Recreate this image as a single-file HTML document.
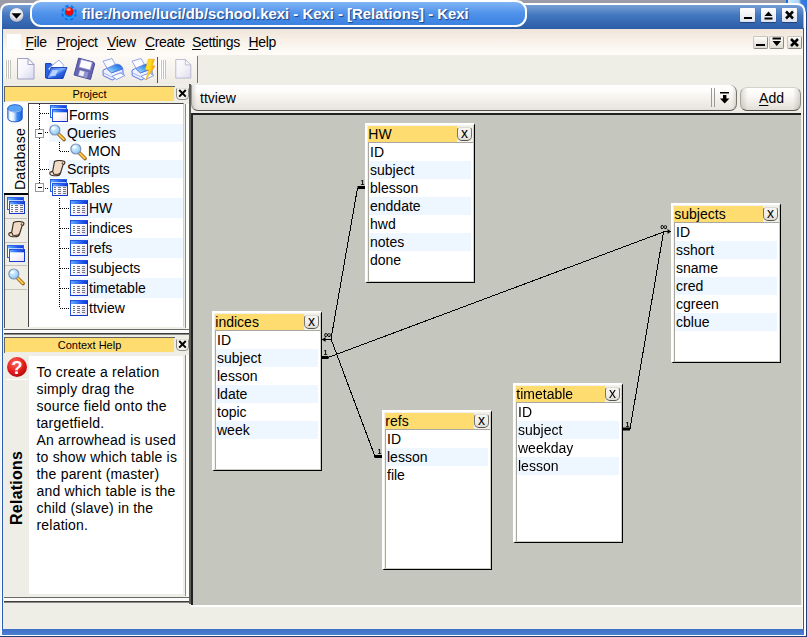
<!DOCTYPE html><html><head><meta charset="utf-8"><title>Kexi</title><style>
*{margin:0;padding:0;box-sizing:border-box}
html,body{width:807px;height:637px;overflow:hidden;background:#9b9ba7;font-family:"Liberation Sans",sans-serif;font-size:14px;color:#000}
.a{position:absolute}
#win{position:absolute;left:0;top:0;width:807px;height:637px;overflow:hidden}
.t{position:absolute;white-space:nowrap;line-height:18px;height:18px}
u{text-decoration:underline;text-underline-offset:2px}
.tbl{position:absolute;width:110px;height:160px;background:#f1f0e9;border-left:2px solid #fff;border-top:2px solid #fff;border-right:1px solid #000;border-bottom:1px solid #000;box-shadow:inset -1px -1px 0 #cdccc2}
.tbl .hd{position:absolute;left:1px;top:1px;width:89px;height:16px;background:#ffdc70;line-height:16px;padding-left:0.3px;white-space:nowrap}
.tbl .cl{position:absolute;left:90px;top:1.5px;width:15px;height:14.500px;border:1px solid #77756e;border-top-color:#dddbd3;border-bottom-color:#55534e;border-radius:3px 3px 5px 5px;background:linear-gradient(#f6f5f0,#efede7 60%,#dedbd2);font-size:14px;line-height:11.500px;text-align:center}
.tbl .lv{position:absolute;left:1px;top:17px;width:105px;height:139px;border-left:1px solid #a8a8a0;border-top:1px solid #a8a8a0;background:#fff}
.tbl .r{position:absolute;left:0px;width:102px;height:18px;line-height:18px;padding-left:1px;white-space:nowrap}
.tbl .r.alt{background:#eef6ff}
.row{position:absolute;left:49px;width:135px;line-height:18px;white-space:nowrap}
.row.alt{background:#eef6ff}
</style></head><body><div id="win">
<div class="a" style="left:786px;top:0;width:21px;height:12px;background:linear-gradient(90deg,#1a6ae0 0,#1a6ae0 2px,#cfe8fa 2px,#a8d4f6 13px,#3a80e0 15px,#2f74dc 21px)"></div>

<svg class="a" style="left:0;top:0" width="807" height="30" viewBox="0 0 807 30">
<defs>
<linearGradient id="tb" x1="0" y1="0" x2="0" y2="1"><stop offset="0" stop-color="#7ca2d8"/><stop offset="0.45" stop-color="#4176be"/><stop offset="1" stop-color="#2a5aa4"/></linearGradient>
<linearGradient id="tab" x1="0" y1="0" x2="0" y2="1"><stop offset="0" stop-color="#86b8f6"/><stop offset="0.5" stop-color="#4f92ea"/><stop offset="1" stop-color="#3a80e0"/></linearGradient>
<radialGradient id="btn" cx="0.5" cy="0.3" r="0.7"><stop offset="0" stop-color="#ffffff"/><stop offset="0.6" stop-color="#e4e6ee"/><stop offset="1" stop-color="#a8adc0"/></radialGradient>
</defs>
<path d="M1,30 V12 Q1,4 9,4 H796.500 Q804.500,4 804.500,12 V30 Z" fill="url(#tb)" stroke="#fff" stroke-width="2"/>
<rect x="31" y="1" width="495" height="25" rx="10" ry="10" fill="url(#tab)" stroke="#fff" stroke-width="2"/>
<circle cx="16.5" cy="15.5" r="7.5" fill="#274f96" opacity="0.5"/>
<circle cx="16.5" cy="15" r="7" fill="url(#btn)"/>
<path d="M11.5,13.300 H21.500 L16.500,18.800 Z" fill="#000"/>
</svg>

<svg class="a" style="left:60px;top:4px" width="18" height="18" viewBox="0 0 18 18"><g transform="rotate(8 9 8.800)"><circle cx="9" cy="8.800" r="5.900" fill="#0874f2"/><circle cx="9" cy="8.800" r="6.300" fill="none" stroke="#0874f2" stroke-width="3" stroke-dasharray="2.800 2.148"/><circle cx="9" cy="8.800" r="5.200" fill="none" stroke="#2cb4ff" stroke-width="1.400" opacity="0.900"/></g><circle cx="9.300" cy="7.500" r="4.200" fill="#ea0a0a"/><ellipse cx="8.600" cy="5.600" rx="2.400" ry="1.300" fill="#ff9a90" opacity="0.900"/></svg>
<div class="t" id="title" style="left:81.500px;top:5px;font-weight:bold;font-size:14.9px;color:#fff;text-shadow:1px 1px 1px #1c3f80;letter-spacing:0px">file:/home/luci/db/school.kexi - Kexi - [Relations] - Kexi</div>
<div class="a" style="left:740px;top:8px;width:15px;height:14px;background:linear-gradient(#ffffff,#dfe3ee);border-radius:1px;box-shadow:0 1px 1px #1d3f7c"></div><div class="a" style="left:744px;top:17px;width:8px;height:2px;background:#000"></div>
<div class="a" style="left:761px;top:8px;width:15px;height:14px;background:linear-gradient(#ffffff,#dfe3ee);border-radius:1px;box-shadow:0 1px 1px #1d3f7c"></div><svg class="a" style="left:761px;top:8px" width="15" height="14"><path d="M3.5,8 L7.5,3.5 L11.5,8 Z" fill="#000"/><rect x="3.5" y="9.5" width="8" height="2" fill="#000"/></svg>
<div class="a" style="left:782px;top:8px;width:15px;height:14px;background:linear-gradient(#ffffff,#dfe3ee);border-radius:1px;box-shadow:0 1px 1px #1d3f7c"></div><svg class="a" style="left:782px;top:8px" width="15" height="14"><path d="M4,3.5 L11,10.5 M11,3.5 L4,10.5" stroke="#000" stroke-width="2.500"/></svg>
<div class="a" style="left:3px;top:29px;width:800px;height:600px;background:#efeee6"></div>
<div class="a" style="left:0;top:12px;width:1px;height:625px;background:#f2f5fa"></div>
<div class="a" style="left:1px;top:12px;width:1px;height:625px;background:#fff"></div>
<div class="a" style="left:2px;top:28px;width:1px;height:607px;background:#2f5fae"></div>
<div class="a" style="left:802px;top:29px;width:1px;height:600px;background:#fcf8ee"></div>
<div class="a" style="left:803px;top:28px;width:1px;height:607px;background:#2a5a9e"></div>
<div class="a" style="left:804px;top:12px;width:2px;height:625px;background:#fff"></div>
<div class="a" style="left:806px;top:12px;width:1px;height:625px;background:#1f3f78"></div>
<div class="a" style="left:2px;top:629px;width:802px;height:6px;background:linear-gradient(#3d70c4,#4a7fd2)"></div>
<div class="a" style="left:1px;top:635px;width:805px;height:1px;background:#fff"></div>
<div class="a" style="left:0;top:636px;width:807px;height:1px;background:#1f3f78"></div>
<div class="a" style="left:3px;top:29px;width:800px;height:26px;background:linear-gradient(#efe4d8,#f8f1e9 45%,#fffcf8)"></div>
<div class="a" style="left:7px;top:34px;width:14px;height:15px;background:#fff"></div>
<div class="t" style="left:25.5px;top:33px;letter-spacing:-0.35px"><u>F</u>ile</div>
<div class="t" style="left:56.5px;top:33px;letter-spacing:-0.35px"><u>P</u>roject</div>
<div class="t" style="left:107px;top:33px;letter-spacing:-0.35px"><u>V</u>iew</div>
<div class="t" style="left:145px;top:33px;letter-spacing:-0.35px"><u>C</u>reate</div>
<div class="t" style="left:192px;top:33px;letter-spacing:-0.35px"><u>S</u>ettings</div>
<div class="t" style="left:248.5px;top:33px;letter-spacing:-0.35px"><u>H</u>elp</div>
<div class="a" style="left:753px;top:36px;width:15px;height:13px;background:linear-gradient(#fdfdfb,#dddbd2);border:1px solid #8a8a84;border-top-color:#c8c6be;border-left-color:#c8c6be;border-radius:2px"></div><div class="a" style="left:756px;top:44px;width:9px;height:2px;background:#000"></div>
<div class="a" style="left:769px;top:36px;width:15px;height:13px;background:linear-gradient(#fdfdfb,#dddbd2);border:1px solid #8a8a84;border-top-color:#c8c6be;border-left-color:#c8c6be;border-radius:2px"></div><svg class="a" style="left:769px;top:36px" width="15" height="13"><rect x="3.500" y="1.500" width="8.500" height="2" fill="#000"/><path d="M3.500,5 H12 L7.750,10 Z" fill="#000"/></svg>
<div class="a" style="left:786.5px;top:36px;width:15px;height:13px;background:linear-gradient(#fdfdfb,#dddbd2);border:1px solid #8a8a84;border-top-color:#c8c6be;border-left-color:#c8c6be;border-radius:2px"></div><svg class="a" style="left:786.5px;top:36px" width="15" height="13"><path d="M4,3 L11,10 M11,3 L4,10" stroke="#000" stroke-width="2.500"/></svg>
<div class="a" style="left:3px;top:55px;width:194px;height:29px;background:linear-gradient(#fdfbf7,#f5f1ec 55%,#eeebe4)"></div>
<div class="a" style="left:197px;top:56px;width:1px;height:27px;background:#777"></div>
<div class="a" style="left:157px;top:57px;width:1px;height:26px;background:#555"></div>
<div class="a" style="left:5px;top:60px;width:6px;height:19px;background:linear-gradient(90deg,#fff 0,#fff 1px,#c3c4bb 1px,#c3c4bb 2px,#fff 2px,#fff 3px,#c3c4bb 3px,#c3c4bb 4px,#fff 4px,#fff 5px,#c3c4bb 5px,#c3c4bb 6px)"></div>
<div class="a" style="left:160px;top:60px;width:6px;height:19px;background:linear-gradient(90deg,#fff 0,#fff 1px,#c3c4bb 1px,#c3c4bb 2px,#fff 2px,#fff 3px,#c3c4bb 3px,#c3c4bb 4px,#fff 4px,#fff 5px,#c3c4bb 5px,#c3c4bb 6px)"></div>
<svg class="a" style="left:0;top:0" width="0" height="0"><defs>
<linearGradient id="docg" x1="0" y1="0" x2="1" y2="1"><stop offset="0" stop-color="#ffffff"/><stop offset="0.5" stop-color="#f4f4fc"/><stop offset="1" stop-color="#d6d6f0"/></linearGradient>
<linearGradient id="wt" x1="0" y1="0" x2="1" y2="0"><stop offset="0" stop-color="#62acff"/><stop offset="0.5" stop-color="#2e6cf0"/><stop offset="1" stop-color="#1238dc"/></linearGradient>
<linearGradient id="wb" x1="0" y1="0" x2="1" y2="1"><stop offset="0" stop-color="#ffffff"/><stop offset="0.5" stop-color="#fbf9ff"/><stop offset="1" stop-color="#e4def6"/></linearGradient>
<linearGradient id="fold" x1="0" y1="0" x2="1" y2="1"><stop offset="0" stop-color="#1c50d8"/><stop offset="0.45" stop-color="#7fb0ff"/><stop offset="0.6" stop-color="#2a64e4"/><stop offset="1" stop-color="#1038b0"/></linearGradient>
<radialGradient id="glass" cx="0.35" cy="0.3" r="0.8"><stop offset="0" stop-color="#e8f8ff"/><stop offset="0.6" stop-color="#a8d8fa"/><stop offset="1" stop-color="#88bdf0"/></radialGradient>
<linearGradient id="cyl" x1="0" y1="0" x2="1" y2="0"><stop offset="0" stop-color="#9cc8fa"/><stop offset="0.2" stop-color="#ffffff"/><stop offset="0.42" stop-color="#d8ecff"/><stop offset="0.65" stop-color="#3c8cf0"/><stop offset="1" stop-color="#1a62e0"/></linearGradient>
<linearGradient id="prn" x1="0" y1="1" x2="1" y2="0"><stop offset="0" stop-color="#c4ecff"/><stop offset="0.45" stop-color="#5aa8f4"/><stop offset="1" stop-color="#1c58dc"/></linearGradient>
<linearGradient id="bolt" x1="0" y1="0" x2="1" y2="0.3"><stop offset="0" stop-color="#fff428"/><stop offset="0.55" stop-color="#ffd81a"/><stop offset="1" stop-color="#f89410"/></linearGradient>
<g id="tblicon"><rect x="0.5" y="0.5" width="17" height="15" fill="url(#wb)" stroke="#2354e2"/><rect x="1" y="1" width="16" height="3" fill="url(#wt)"/><path d="M0.500,15.500 H17.500 V0.500" fill="none" stroke="#1636c8"/><g fill="#74747c"><rect x="3" y="6" width="2" height="1"/><rect x="7" y="6" width="3" height="1"/><rect x="12" y="6" width="3" height="1"/><rect x="3" y="8" width="2" height="1"/><rect x="7" y="8" width="3" height="1"/><rect x="12" y="8" width="3" height="1"/><rect x="3" y="10" width="2" height="1"/><rect x="7" y="10" width="3" height="1"/><rect x="12" y="10" width="3" height="1"/><rect x="3" y="12" width="2" height="1"/><rect x="7" y="12" width="3" height="1"/><rect x="12" y="12" width="3" height="1"/></g></g>
<g id="forms"><rect x="0.5" y="0.5" width="16" height="12" fill="#fafbff" stroke="#2a62e6"/><rect x="1" y="1" width="15" height="2.300" fill="url(#wt)"/><rect x="2.500" y="4.500" width="15" height="12" fill="url(#wb)" stroke="#2354e2"/><rect x="3" y="5" width="14" height="2.300" fill="url(#wt)"/><path d="M2.500,16.500 H17.500 V4.500" fill="none" stroke="#1636c8"/></g>
<g id="tables"><rect x="0.5" y="0.5" width="16" height="12" fill="#fafbff" stroke="#2a62e6"/><rect x="1" y="1" width="15" height="2.300" fill="url(#wt)"/><rect x="2.500" y="4.500" width="15" height="12" fill="url(#wb)" stroke="#2354e2"/><rect x="3" y="5" width="14" height="2.300" fill="url(#wt)"/><path d="M2.500,16.500 H17.500 V4.500" fill="none" stroke="#1636c8"/><g fill="#74747c"><rect x="4" y="8" width="2" height="1"/><rect x="8" y="8" width="3" height="1"/><rect x="13" y="8" width="3" height="1"/><rect x="4" y="10" width="2" height="1"/><rect x="8" y="10" width="3" height="1"/><rect x="13" y="10" width="3" height="1"/><rect x="4" y="12" width="2" height="1"/><rect x="8" y="12" width="3" height="1"/><rect x="13" y="12" width="3" height="1"/><rect x="4" y="14" width="2" height="1"/><rect x="8" y="14" width="3" height="1"/><rect x="13" y="14" width="3" height="1"/></g></g>
<g id="mag"><path d="M9,9.500 L15,15.500" stroke="#8a5a10" stroke-width="3.600" stroke-linecap="round"/><path d="M9.500,10 L14.800,15.300" stroke="#ffc848" stroke-width="2" stroke-linecap="round"/><circle cx="5.800" cy="6" r="5" fill="url(#glass)" stroke="#7f93b8" stroke-width="1.200"/><ellipse cx="4.300" cy="4.200" rx="1.800" ry="1.200" fill="#fff" opacity="0.8"/></g>
<g id="scroll"><path d="M5.500,1.500 C8,0.500 12,0.300 15,1.200 C16.500,2 16,4.500 14.200,4.300 L11.500,13 C10.800,15.800 7,16.200 2.500,15.200 C0.200,14.600 0.200,11.800 2.300,11.600 L3.600,11.700 Z" fill="#f0dcc6" stroke="#3e2c22" stroke-width="1.150"/><path d="M2.300,11.700 C4,11.500 5.500,12.800 4.200,14 C6.500,14.800 9.500,14.600 11,13" fill="none" stroke="#3e2c22" stroke-width="1"/><path d="M14.200,4.300 C13,4.200 12.800,2.800 13.800,2.400" fill="none" stroke="#3e2c22" stroke-width="1"/></g>
<g id="doc"><path d="M0.500,0.500 H11 L17,6.500 V21 H0.500 Z" fill="url(#docg)" stroke="#a2a2c6"/><path d="M11,0.500 V6.500 H17 Z" fill="#fbfbff" stroke="#a2a2c6" stroke-linejoin="round"/></g>
<g id="printer"><path d="M1,12.300 L4.600,10.300 L9.500,14.800 L20.800,10.800 L21.200,16.300 L10.200,22 L1.200,17.600 Z" fill="#eef0ff" stroke="#4468de" stroke-width="0.900" stroke-linejoin="round"/><path d="M4.800,10.400 L13.800,6.300 C17.500,5.800 20.300,8 20.700,10.800 L9.500,14.800 Z" fill="url(#prn)" stroke="#2a66dc" stroke-width="0.600"/><path d="M1,3.200 L10,0.500 L13.300,6.300 L5,10.200 Z" fill="#fbfbff" stroke="#7a92e2" stroke-width="0.800" stroke-linejoin="round"/><path d="M1.200,14.800 L10,19 L21,13.500" fill="none" stroke="#8aa2ec" stroke-width="0.800"/><path d="M10,18.300 L18.200,15 L23,17.400 L14.600,21.500 Z" fill="#fdfdff" stroke="#6a86e2" stroke-width="0.800" stroke-linejoin="round"/></g>
</defs></svg><svg class="a" style="left:17px;top:58px" width="18" height="22"><use href="#doc"/></svg><svg class="a" style="left:44px;top:59px" width="24" height="21">
<path d="M1.500,4.500 H7 L8.500,6.500 H14 V19 H1.500 Z" fill="#2a62e2" stroke="#1a44c0"/>
<path d="M4.500,9.500 L15,1 L19.800,6.300 L17,10 L7,14 Z" fill="#fff" stroke="#7a9ae0" stroke-width="0.800"/>
<path d="M3,19.500 L7,8.500 H23 L19,19.500 Z" fill="url(#fold)" stroke="#143cb8" stroke-width="0.900"/>
<path d="M6,17 L8.300,11 H14 L11.500,17 Z" fill="#cfe4ff" opacity="0.75"/>
</svg><svg class="a" style="left:72px;top:56px" width="25" height="26"><g transform="rotate(15 12.500 13)">
<path d="M4,4 H19.500 L21,5.500 V21.500 H4 Z" fill="#6466b2" stroke="#4a4a96" stroke-width="0.900"/>
<rect x="6.800" y="4.600" width="11.400" height="8" fill="#fdfdff" stroke="#9a9ad0" stroke-width="0.600"/>
<rect x="7.800" y="15" width="9.400" height="6.300" fill="#9294cc"/>
<rect x="8.600" y="15.600" width="4.600" height="4.800" fill="#f0f0fa"/>
</g></svg><svg class="a" style="left:102px;top:58px" width="24" height="23"><use href="#printer"/></svg><svg class="a" style="left:131px;top:58px" width="25" height="23"><use href="#printer"/><path d="M17.500,1 L23.500,1.500 L21.200,7.500 L24,8 L14.800,22 L17.600,12.200 L14.200,11.500 Z" fill="url(#bolt)" stroke="#ee9a10" stroke-width="0.500"/></svg><svg class="a" style="left:175px;top:59px;opacity:0.75" width="17" height="20" viewBox="0 0 18 22"><use href="#doc"/></svg>
<div class="a" style="left:4px;top:86px;width:171px;height:16px;border-left:1px solid #66645c;border-top:1px solid #66645c"></div>
<div class="a" style="left:5px;top:87px;width:169px;height:14px;background:#ffdc70;font-size:11px;line-height:15px;text-align:center">Project</div>
<svg class="a" style="left:176px;top:88px" width="13" height="12"><path d="M0.500,0.500 H12.500 V8 Q12.500,11.500 9,11.500 H4 Q0.500,11.500 0.500,8 Z" fill="#f3f2ec" stroke="#8e8c84"/><path d="M0.500,0.500 H12.500" stroke="#e4e2da"/><path d="M3.200,2 L9.800,8.600 M9.800,2 L3.200,8.600" stroke="#000" stroke-width="2"/></svg>
<div class="a" style="left:4px;top:103px;width:24px;height:225px;background:#efeee6"></div>
<div class="a" style="left:4px;top:102px;width:24px;height:91px;background:#fbfbf8"></div>
<div class="a" style="left:4px;top:193px;width:24px;height:2px;background:#000"></div>
<div class="a" style="left:5px;top:218px;width:22px;height:1px;background:#c4c2b8"></div>
<div class="a" style="left:5px;top:242px;width:22px;height:1px;background:#c4c2b8"></div>
<div class="a" style="left:5px;top:265px;width:22px;height:1px;background:#c4c2b8"></div>
<div class="a" style="left:5px;top:289px;width:22px;height:1px;background:#c4c2b8"></div>
<div class="a" style="left:4px;top:195px;width:1px;height:133px;background:#555"></div>
<div class="t" style="left:-13px;top:149px;width:66px;height:16px;line-height:16px;transform:rotate(-90deg);font-size:14px;letter-spacing:0.25px">Database</div>
<div class="a" style="left:28px;top:103px;width:156px;height:224px;background:#fff;border-left:1px solid #444;border-top:1px solid #444;border-right:1px solid #d4d2ca"></div>
<div class="a" style="left:185px;top:104px;width:1px;height:224px;background:#8a8a86"></div>
<div class="a" style="left:186px;top:104px;width:3px;height:226px;background:#fbfbf9"></div>
<div class="a" style="left:186px;top:355px;width:3px;height:244px;background:#fbfbf9"></div>
<div class="a" style="left:189px;top:84px;width:2px;height:520px;background:#5c5c58"></div>
<div class="t" style="left:69px;top:106px;height:18px;line-height:19px;font-size:14px">Forms</div>
<div class="a" style="left:49px;top:124px;width:134px;height:18px;background:#eef6ff"></div>
<div class="t" style="left:67px;top:124px;height:18px;line-height:19px;font-size:14px">Queries</div>
<div class="t" style="left:88px;top:142px;height:18px;line-height:19px;font-size:14px">MON</div>
<div class="a" style="left:49px;top:160px;width:134px;height:18px;background:#eef6ff"></div>
<div class="t" style="left:67px;top:160px;height:18px;line-height:19px;font-size:14px">Scripts</div>
<div class="t" style="left:69px;top:178px;height:20px;line-height:21px;font-size:14px">Tables</div>
<div class="a" style="left:69px;top:198px;width:114px;height:20px;background:#eef6ff"></div>
<div class="t" style="left:89px;top:198px;height:20px;line-height:21px;font-size:14px">HW</div>
<div class="t" style="left:89px;top:218px;height:20px;line-height:21px;font-size:14px">indices</div>
<div class="a" style="left:69px;top:238px;width:114px;height:20px;background:#eef6ff"></div>
<div class="t" style="left:89px;top:238px;height:20px;line-height:21px;font-size:14px">refs</div>
<div class="t" style="left:89px;top:258px;height:20px;line-height:21px;font-size:14px">subjects</div>
<div class="a" style="left:69px;top:278px;width:114px;height:20px;background:#eef6ff"></div>
<div class="t" style="left:89px;top:278px;height:20px;line-height:21px;font-size:14px">timetable</div>
<div class="t" style="left:89px;top:298px;height:20px;line-height:21px;font-size:14px">ttview</div>
<svg class="a" style="left:28px;top:103px" width="160" height="225" shape-rendering="crispEdges">
<g stroke="#000" stroke-width="1" stroke-dasharray="1 1" fill="none">
<path d="M11.5,1 V85"/><path d="M12,10.5 H21"/><path d="M17,29.5 H21"/><path d="M12,66.5 H21"/><path d="M17,85.5 H21"/>
<path d="M31.5,39 V48"/><path d="M32,48.5 H42"/>
<path d="M31.5,95 V205"/><path d="M32,105.5 H42"/><path d="M32,125.5 H42"/><path d="M32,145.5 H42"/><path d="M32,165.5 H42"/><path d="M32,185.5 H42"/><path d="M32,205.5 H42"/>
</g>
<g fill="#fff" stroke="#999"><rect x="7.500" y="26.500" width="8" height="8"/><rect x="7.500" y="80.500" width="8" height="8"/></g>
<g stroke="#000"><path d="M9.500,30.500 H14"/><path d="M9.500,84.500 H14"/></g>
</svg>
<svg class="a" style="left:50px;top:105px" width="18" height="18"><use href="#forms"/></svg><svg class="a" style="left:49px;top:124px" width="18" height="18"><use href="#mag"/></svg><svg class="a" style="left:70px;top:143px" width="18" height="18"><use href="#mag"/></svg><svg class="a" style="left:49px;top:160px" width="18" height="18"><use href="#scroll"/></svg><svg class="a" style="left:50px;top:179px" width="18" height="18"><use href="#tables"/></svg><svg class="a" style="left:70px;top:200px" width="18" height="16"><use href="#tblicon"/></svg><svg class="a" style="left:70px;top:220px" width="18" height="16"><use href="#tblicon"/></svg><svg class="a" style="left:70px;top:240px" width="18" height="16"><use href="#tblicon"/></svg><svg class="a" style="left:70px;top:260px" width="18" height="16"><use href="#tblicon"/></svg><svg class="a" style="left:70px;top:280px" width="18" height="16"><use href="#tblicon"/></svg><svg class="a" style="left:70px;top:300px" width="18" height="16"><use href="#tblicon"/></svg><svg class="a" style="left:6.500px;top:103.500px" width="16" height="19"><path d="M0.800,4.300 V14.300 C0.800,19 15.200,19 15.200,14.300 V4.300 Z" fill="url(#cyl)" stroke="#1848d6" stroke-width="0.900"/><ellipse cx="8" cy="4.300" rx="7.200" ry="3.600" fill="#56a4f6" stroke="#1a56dc" stroke-width="0.900"/><path d="M1.500,6 C4,8.500 12,8.500 14.500,6" fill="none" stroke="#ffffff" stroke-width="0.700" opacity="0.800"/></svg><svg class="a" style="left:7px;top:197px" width="18" height="18"><use href="#tables"/></svg><svg class="a" style="left:8px;top:221px" width="18" height="18"><use href="#scroll"/></svg><svg class="a" style="left:7px;top:245px" width="18" height="18"><use href="#forms"/></svg><svg class="a" style="left:8px;top:268px" width="18" height="18"><use href="#mag"/></svg>
<div class="a" style="left:4px;top:329px;width:185px;height:1px;background:#6a6a66"></div>
<div class="a" style="left:4px;top:330px;width:185px;height:3px;background:#fbfbf9"></div>
<div class="a" style="left:4px;top:333px;width:185px;height:1px;background:#3c3c3a"></div>
<div class="a" style="left:4px;top:334px;width:185px;height:1px;background:#8a8a86"></div>
<div class="a" style="left:4px;top:337px;width:171px;height:16px;border-left:1px solid #66645c;border-top:1px solid #66645c"></div>
<div class="a" style="left:5px;top:338px;width:169px;height:14px;background:#ffdc70;font-size:11px;line-height:15px;text-align:center">Context Help</div>
<svg class="a" style="left:176px;top:339px" width="13" height="12"><path d="M0.500,0.500 H12.500 V8 Q12.500,11.500 9,11.500 H4 Q0.500,11.500 0.500,8 Z" fill="#f3f2ec" stroke="#8e8c84"/><path d="M0.500,0.500 H12.500" stroke="#e4e2da"/><path d="M3.200,2 L9.800,8.600 M9.800,2 L3.200,8.600" stroke="#000" stroke-width="2"/></svg>
<div class="a" style="left:29px;top:356px;width:154px;height:238px;background:#fff"></div>
<div class="a" style="left:185px;top:355px;width:1px;height:241px;background:#8a8a86"></div>
<div class="a" style="left:6px;top:379px;width:22px;height:1px;background:#fdfdfb"></div>
<svg class="a" style="left:6px;top:356px" width="22" height="22" viewBox="0 0 22 22"><defs><radialGradient id="qg" cx="0.4" cy="0.3" r="0.8"><stop offset="0" stop-color="#ff6a5a"/><stop offset="0.6" stop-color="#e01818"/><stop offset="1" stop-color="#a00808"/></radialGradient></defs><circle cx="11" cy="11" r="10" fill="url(#qg)"/><text x="11" y="17.500" style="font-family:Liberation Sans,sans-serif;font-weight:bold;font-size:18.500px" fill="#fff" text-anchor="middle">?</text></svg>
<div class="t" style="left:-29px;top:470px;width:92px;height:18px;line-height:18px;transform:rotate(-90deg);font-weight:bold;font-size:16px;letter-spacing:0.25px">Relations</div>
<div class="t" style="left:36.500px;top:363.5px;height:17px;line-height:17px;font-size:14px;letter-spacing:0.2px">To create a relation</div>
<div class="t" style="left:36.500px;top:380.5px;height:17px;line-height:17px;font-size:14px;letter-spacing:0.2px">simply drag the</div>
<div class="t" style="left:36.500px;top:397.5px;height:17px;line-height:17px;font-size:14px;letter-spacing:0.2px">source field onto the</div>
<div class="t" style="left:36.500px;top:414.5px;height:17px;line-height:17px;font-size:14px;letter-spacing:0.2px">targetfield.</div>
<div class="t" style="left:36.500px;top:431.5px;height:17px;line-height:17px;font-size:14px;letter-spacing:0.2px">An arrowhead is used</div>
<div class="t" style="left:36.500px;top:448.5px;height:17px;line-height:17px;font-size:14px;letter-spacing:0.2px">to show which table is</div>
<div class="t" style="left:36.500px;top:465.5px;height:17px;line-height:17px;font-size:14px;letter-spacing:0.2px">the parent (master)</div>
<div class="t" style="left:36.500px;top:482.5px;height:17px;line-height:17px;font-size:14px;letter-spacing:0.2px">and which table is the</div>
<div class="t" style="left:36.500px;top:499.5px;height:17px;line-height:17px;font-size:14px;letter-spacing:0.2px">child (slave) in the</div>
<div class="t" style="left:36.500px;top:516.5px;height:17px;line-height:17px;font-size:14px;letter-spacing:0.2px">relation.</div>
<div class="a" style="left:4px;top:597px;width:185px;height:1px;background:#6a6a66"></div>
<div class="a" style="left:4px;top:598px;width:185px;height:3px;background:#fbfbf9"></div>
<div class="a" style="left:4px;top:601px;width:185px;height:1px;background:#3c3c3a"></div>
<div class="a" style="left:4px;top:602px;width:185px;height:1px;background:#8a8a86"></div>
<div class="a" style="left:191px;top:85px;width:546px;height:25.500px;background:linear-gradient(90deg,rgba(60,50,40,.16),rgba(60,50,40,0) 5px,rgba(60,50,40,0) 540px,rgba(60,50,40,.14)),linear-gradient(#ffffff,#fdfcfa 25%,#f3f0eb 60%,#e7e3dc);border-left:1px solid #9a9892;border-bottom:1.500px solid #55534e;border-right:1px solid #77756e;border-radius:0 7px 7px 7px"></div>
<div class="t" style="left:200px;top:89px;font-size:14px">ttview</div>
<div class="a" style="left:711px;top:88px;width:1px;height:19px;background:#999"></div><div class="a" style="left:714px;top:88px;width:1px;height:19px;background:#999"></div>
<svg class="a" style="left:718px;top:91px" width="13" height="14"><rect x="2" y="1" width="9" height="1.5" fill="#000"/><rect x="5" y="4" width="3.400" height="4" fill="#000"/><path d="M2,7.500 H11.400 L6.700,12.500 Z" fill="#000"/></svg>
<div class="a" style="left:740px;top:86.500px;width:61px;height:24px;background:linear-gradient(90deg,rgba(60,50,40,.16),rgba(60,50,40,0) 7px,rgba(60,50,40,0) 52px,rgba(60,50,40,.18)),linear-gradient(#ffffff,#fbfaf7 30%,#f1eee9 65%,#e2ded6);border:1px solid #8c8a82;border-top-color:#d4d2ca;border-left-color:#a8a69e;border-bottom:1.500px solid #55534e;border-radius:7px;text-align:center;line-height:21px;font-size:14px;padding-left:2px"><u>A</u>dd</div>
<div class="a" style="left:191px;top:113px;width:610px;height:492px;background:#c5c6bd;border-left:2px solid #222;border-top:2px solid #222"></div>
<div class="a" style="left:3px;top:605px;width:800px;height:2px;background:#fff"></div>
<div class="a" style="left:3px;top:605px;width:188px;height:2px;background:#efeee6"></div>
<svg class="a" style="left:0;top:0;will-change:transform" width="807" height="637">
<g stroke="#000" stroke-width="1" fill="none" shape-rendering="crispEdges">
<path d="M357.500,188 L331,339"/>
<path d="M331,339 L375,456.500"/>
<path d="M322,339.500 H331"/>
<path d="M328,357.500 L663.500,232"/>
<path d="M663.500,232 L630,429"/>
<path d="M663,231.500 H671"/>
</g>
<g fill="#000">
<path d="M322,339.500 L325.500,337 V342 Z"/>
<path d="M671,231.500 L667.500,229 V234 Z"/>
<rect x="357.500" y="186" width="7.500" height="3"/>
<rect x="322" y="356" width="6.500" height="3"/>
<rect x="374.500" y="455" width="7.500" height="3"/>
<rect x="623" y="427.500" width="7" height="3"/>
</g>
<g style="font-family:'Liberation Sans',sans-serif;font-size:7px;font-weight:bold" fill="#000">
<text x="360.500" y="185">1</text><text x="323.500" y="355">1</text><text x="377.500" y="454">1</text><text x="625.500" y="426.500">1</text>
<text x="324" y="338" style="font-size:10px;font-weight:bold">∞</text><text x="660.300" y="230" style="font-size:10px;font-weight:bold">∞</text>
</g>
</svg>
<div class="tbl" style="left:365px;top:123px"><div class="hd">HW</div><div class="cl">x</div><div class="lv"><div class="r" style="top:0px">ID</div><div class="r alt" style="top:18px">subject</div><div class="r" style="top:36px">blesson</div><div class="r alt" style="top:54px">enddate</div><div class="r" style="top:72px">hwd</div><div class="r alt" style="top:90px">notes</div><div class="r" style="top:108px">done</div></div></div>
<div class="tbl" style="left:212px;top:311px"><div class="hd">indices</div><div class="cl">x</div><div class="lv"><div class="r" style="top:0px">ID</div><div class="r alt" style="top:18px">subject</div><div class="r" style="top:36px">lesson</div><div class="r alt" style="top:54px">ldate</div><div class="r" style="top:72px">topic</div><div class="r alt" style="top:90px">week</div></div></div>
<div class="tbl" style="left:382px;top:410px"><div class="hd">refs</div><div class="cl">x</div><div class="lv"><div class="r" style="top:0px">ID</div><div class="r alt" style="top:18px">lesson</div><div class="r" style="top:36px">file</div></div></div>
<div class="tbl" style="left:513px;top:383px"><div class="hd">timetable</div><div class="cl">x</div><div class="lv"><div class="r" style="top:0px">ID</div><div class="r alt" style="top:18px">subject</div><div class="r" style="top:36px">weekday</div><div class="r alt" style="top:54px">lesson</div></div></div>
<div class="tbl" style="left:671px;top:203px"><div class="hd">subjects</div><div class="cl">x</div><div class="lv"><div class="r" style="top:0px">ID</div><div class="r alt" style="top:18px">sshort</div><div class="r" style="top:36px">sname</div><div class="r alt" style="top:54px">cred</div><div class="r" style="top:72px">cgreen</div><div class="r alt" style="top:90px">cblue</div></div></div>
</div></body></html>
